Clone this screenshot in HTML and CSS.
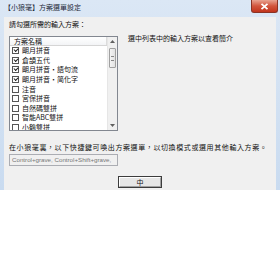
FILE: index.html
```html
<!DOCTYPE html>
<html>
<head>
<meta charset="utf-8">
<link rel="stylesheet" href="styles.css">
</head>
<body>
<div class="window">
  <div class="titlebar">
    <span class="title">【小狼毫】方案選單設定</span>
    <div class="close"><svg width="9" height="7" viewBox="0 0 9 7"><path d="M1.5 0.8 L7.5 6.2 M7.5 0.8 L1.5 6.2" stroke="#fff" stroke-width="1.8"/></svg></div>
  </div>
  <div class="client">
    <div class="prompt">請勾選所需的輸入方案：</div>
    <div class="main">
      <div class="list">
        <div class="list-body">
          <div class="header"><span class="col">方案名稱</span></div>
          <div class="row"><span class="cb on"></span>朙月拼音</div>
          <div class="row"><span class="cb on"></span>倉頡五代</div>
          <div class="row"><span class="cb on"></span>朙月拼音・語句流</div>
          <div class="row"><span class="cb on"></span>朙月拼音・简化字</div>
          <div class="row"><span class="cb"></span>注音</div>
          <div class="row"><span class="cb"></span>宮保拼音</div>
          <div class="row"><span class="cb"></span>自然碼雙拼</div>
          <div class="row"><span class="cb"></span>智能ABC雙拼</div>
          <div class="row"><span class="cb"></span>小鶴雙拼</div>
        </div>
        <div class="scrollbar">
          <div class="arrow up"><svg width="5" height="3" viewBox="0 0 5 3"><path d="M0 3 L2.5 0 L5 3Z" fill="#606060"/></svg></div>
          <div class="track"><div class="thumb"><span class="grip"></span></div></div>
          <div class="arrow down"><svg width="5" height="3" viewBox="0 0 5 3"><path d="M0 0 L2.5 3 L5 0Z" fill="#606060"/></svg></div>
        </div>
      </div>
      <div class="desc">選中列表中的輸入方案以查看簡介</div>
    </div>
    <div class="hint">在小狼毫裏，以下快捷鍵可喚出方案選單，以切換模式或選用其他輸入方案。</div>
    <div class="hotkeys">Control+grave, Control+Shift+grave,</div>
    <div class="btn-row"><div class="btn"><span class="btn-inner">中</span></div></div>
  </div>
</div>
</body>
</html>
```
FILE: styles.css
```css
html, body {
  margin: 0;
  padding: 0;
  background: #ffffff;
}
body {
  width: 280px;
  height: 270px;
  overflow: hidden;
  font-family: "Noto Sans CJK TC", "Noto Sans", sans-serif;
  font-size: 7px;
  color: #111;
}
.window {
  width: 280px;
  height: 190px;
  background: linear-gradient(#dbe7f5, #c9dbf0);
  padding: 0 4px;
  box-sizing: border-box;
  display: flex;
  flex-direction: column;
}
.titlebar {
  height: 17px;
  flex: none;
  display: flex;
  align-items: flex-start;
  justify-content: space-between;
}
.title {
  margin-top: 3px;
  line-height: 9px;
  color: #1e2a3a;
}
.close {
  width: 27px;
  height: 13px;
  margin-right: -2px;
  background: linear-gradient(#e8a391, #d2553d 50%, #c1341c);
  border: 1px solid #8a3325;
  border-top: none;
  border-radius: 0 0 3px 3px;
  box-sizing: border-box;
  display: flex;
  align-items: center;
  justify-content: center;
}
.client {
  flex: 1;
  background: #f0f0f0;
  padding: 3px 5px 0;
  display: flex;
  flex-direction: column;
}
.prompt {
  line-height: 9px;
}
.main {
  margin-top: 7px;
  display: flex;
  gap: 10px;
}
.list {
  width: 109px;
  height: 95px;
  border: 1px solid #828790;
  box-sizing: border-box;
  background: #fff;
  display: flex;
  overflow: hidden;
}
.list-body {
  flex: 1;
  overflow: hidden;
}
.header {
  height: 9px;
  border-bottom: 1px solid #d5d5d5;
  background: linear-gradient(#ffffff, #f3f4f6);
  box-sizing: border-box;
  display: flex;
}
.col {
  width: 98px;
  border-right: 1px solid #dcdcdc;
  padding-left: 4px;
  line-height: 8px;
  box-sizing: border-box;
}
.row {
  height: 9.6px;
  display: flex;
  align-items: center;
  line-height: 9px;
  padding-left: 2px;
}
.cb {
  width: 7px;
  height: 7px;
  border: 1px solid #555;
  box-sizing: border-box;
  background: #fff;
  margin-right: 3px;
  position: relative;
  flex: none;
}
.cb.on::after {
  content: "";
  position: absolute;
  left: 1px;
  top: 0px;
  width: 3px;
  height: 2px;
  border-left: 1.2px solid #222;
  border-bottom: 1.2px solid #222;
  transform: rotate(-45deg);
}
.scrollbar {
  width: 9px;
  flex: none;
  background: #f0f0f0;
  display: flex;
  flex-direction: column;
  border-left: 1px solid #e6e6e6;
}
.arrow {
  height: 9px;
  display: flex;
  align-items: center;
  justify-content: center;
}
.track {
  flex: 1;
  padding-top: 2px;
}
.thumb {
  height: 18px;
  margin: 0 1px;
  border: 1px solid #a0a0a0;
  border-radius: 1px;
  background: linear-gradient(90deg, #f4f4f4, #e2e2e2);
  display: flex;
  align-items: center;
  justify-content: center;
}
.grip {
  width: 3px;
  height: 3px;
  border-top: 1px solid #888;
  border-bottom: 1px solid #888;
}
.desc {
  line-height: 9px;
  margin-top: -2px;
}
.hint {
  margin-top: 12px;
  line-height: 9px;
  white-space: nowrap;
  letter-spacing: 0.6px;
}
.hotkeys {
  margin-top: 2px;
  width: 109px;
  height: 12px;
  border: 1px solid #abadb3;
  box-sizing: border-box;
  background: #f0f0f0;
  color: #777;
  font-family: "Liberation Sans", sans-serif;
  font-size: 6.2px;
  line-height: 10px;
  padding-left: 2px;
  white-space: nowrap;
  overflow: hidden;
}
.btn-row {
  margin-top: 10px;
  display: flex;
  justify-content: center;
}
.btn {
  width: 44px;
  height: 12px;
  border: 1px solid #3c3c3c;
  box-sizing: border-box;
  background: #e6e6e6;
}
.btn-inner {
  display: block;
  height: 100%;
  border: 1px solid #fff;
  border-right-color: #a0a0a0;
  border-bottom-color: #a0a0a0;
  box-sizing: border-box;
  text-align: center;
  line-height: 8px;
}
```
